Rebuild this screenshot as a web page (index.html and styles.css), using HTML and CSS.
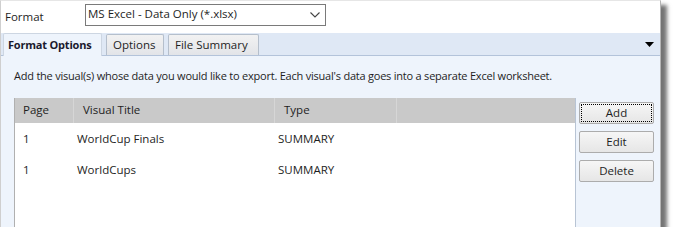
FILE: index.html
```html
<!DOCTYPE html>
<html>
<head>
<meta charset="utf-8">
<link rel="stylesheet" href="styles.css">
</head>
<body>
<div class="window">
  <div class="format-row">
    <span class="format-label">Format</span>
    <div class="select">
      <span>MS Excel - Data Only (*.xlsx)</span>
      <svg class="chev" width="10" height="6" viewBox="0 0 10 6"><polyline points="0.5,0.5 5,5 9.5,0.5" fill="none" stroke="#444" stroke-width="1.1"/></svg>
    </div>
  </div>
  <div class="tabs">
    <div class="tab active">Format Options</div>
    <div class="tab">Options</div>
    <div class="tab">File Summary</div>
    <div class="tab-spacer"></div>
    <svg class="tab-arrow" width="9" height="5" viewBox="0 0 9 5"><polygon points="0,0 9,0 4.5,5" fill="#000"/></svg>
  </div>
  <div class="panel">
    <div class="desc">Add the visual(s) whose data you would like to export. Each visual's data goes into a separate Excel worksheet.</div>
    <div class="content">
      <div class="table">
        <div class="thead">
          <div class="th c1">Page</div>
          <div class="th c2">Visual Title</div>
          <div class="th c3">Type</div>
          <div class="th c4"></div>
        </div>
        <div class="tr">
          <div class="td c1">1</div>
          <div class="td c2">WorldCup Finals</div>
          <div class="td c3">SUMMARY</div>
          <div class="td c4"></div>
        </div>
        <div class="tr">
          <div class="td c1">1</div>
          <div class="td c2">WorldCups</div>
          <div class="td c3">SUMMARY</div>
          <div class="td c4"></div>
        </div>
      </div>
      <div class="side">
        <button class="btn focus">Add</button>
        <button class="btn">Edit</button>
        <button class="btn">Delete</button>
      </div>
    </div>
  </div>
</div>
</body>
</html>
```
FILE: styles.css
```css
html, body {
  margin: 0;
  padding: 0;
  background: #ffffff;
}
body {
  font-family: "Open Sans", "Noto Sans", sans-serif;
  font-size: 11px;
  color: #1e1e1e;
}
.window {
  box-sizing: border-box;
  width: 661px;
  height: 227px;
  border-left: 1px solid #cfcfcf;
  border-right: 1px solid #b4b4b4;
  border-top: 1px solid #e6e6e6;
  background: #ffffff;
  box-shadow: 6px 5px 4px rgba(0, 0, 0, 0.55);
  display: flex;
  flex-direction: column;
  overflow: hidden;
}
.format-row {
  height: 32px;
  display: flex;
  align-items: flex-start;
  padding-left: 4px;
}
.format-label {
  width: 80px;
  margin-top: 8px;
  font-size: 11.5px;
}
.select {
  box-sizing: border-box;
  width: 241px;
  height: 22px;
  margin-top: 3px;
  border: 1px solid #7a7a7a;
  display: flex;
  align-items: center;
  justify-content: space-between;
  padding: 0 5px 0 2px;
  font-size: 11.5px;
  background: #fff;
}
.select span {
  margin-top: -3px;
}
.tabs {
  height: 22px;
  display: flex;
  align-items: flex-end;
  background: #dfe8f5;
  border-bottom: 1px solid #b3c3da;
  padding-left: 2px;
}
.tab {
  box-sizing: border-box;
  height: 21px;
  margin-right: 4px;
  padding: 2px 0 0 6px;
  border: 1px solid #b5bfcc;
  border-bottom: none;
  border-radius: 2px 2px 0 0;
  background: linear-gradient(#f2f2f2, #e2e4e8);
  font-size: 11.5px;
  color: #1e1e1e;
  white-space: nowrap;
}
.tab.active {
  height: 23px;
  margin-bottom: -1px;
  padding: 3px 0 0 4px;
  background: #eef4fc;
  border-color: #cdd6e2;
  font-weight: bold;
  font-size: 11px;
  letter-spacing: -0.2px;
  color: #1a1a2e;
  width: 99px;
}
.tab:nth-child(2) { width: 58px; }
.tab:nth-child(3) { width: 91px; }
.tab-spacer { flex: 1; }
.tab-arrow {
  align-self: center;
  margin-right: 6px;
}
.panel {
  flex: 1;
  background: #eef4fc;
  display: flex;
  flex-direction: column;
  padding-left: 13px;
}
.desc {
  height: 42px;
  box-sizing: border-box;
  padding-top: 12px;
  font-size: 11px;
  letter-spacing: -0.22px;
  white-space: nowrap;
}
.content {
  flex: 1;
  display: flex;
}
.table {
  box-sizing: border-box;
  width: 562px;
  background: #ffffff;
  border-left: 1px solid #b0b0b0;
  border-right: 1px solid #b8c4d4;
}
.thead {
  display: flex;
  height: 25px;
  background: #c9c9c9;
}
.th {
  box-sizing: border-box;
  height: 25px;
  line-height: 24px;
  padding-left: 8px;
  border-right: 1px solid #d6d6d6;
  font-size: 11.5px;
}
.th.c4 { border-right: none; }
.c1 { width: 59px; }
.c2 { width: 201px; }
.c3 { width: 122px; }
.c4 { flex: 1; }
.th.c2, .th.c3 { padding-left: 9px; }
.tr {
  display: flex;
  height: 31px;
  align-items: center;
}
.td {
  box-sizing: border-box;
  padding-left: 8px;
  font-size: 11.5px;
}
.td.c2, .td.c3 { padding-left: 3px; }
.side {
  flex: 1;
  display: flex;
  flex-direction: column;
  align-items: flex-start;
  padding: 4px 0 0 3px;
  gap: 7px;
}
.btn {
  box-sizing: border-box;
  width: 75px;
  height: 22px;
  border: 1px solid #acacac;
  border-radius: 2px;
  background: linear-gradient(#f6f6f6, #e6e6e6);
  font-family: "Open Sans", "Noto Sans", sans-serif;
  font-size: 11.5px;
  color: #1e1e1e;
  padding: 0 0 2px 0;
  margin: 0;
}
.btn.focus {
  outline: 1px dotted #000;
  outline-offset: -3px;
}
```
